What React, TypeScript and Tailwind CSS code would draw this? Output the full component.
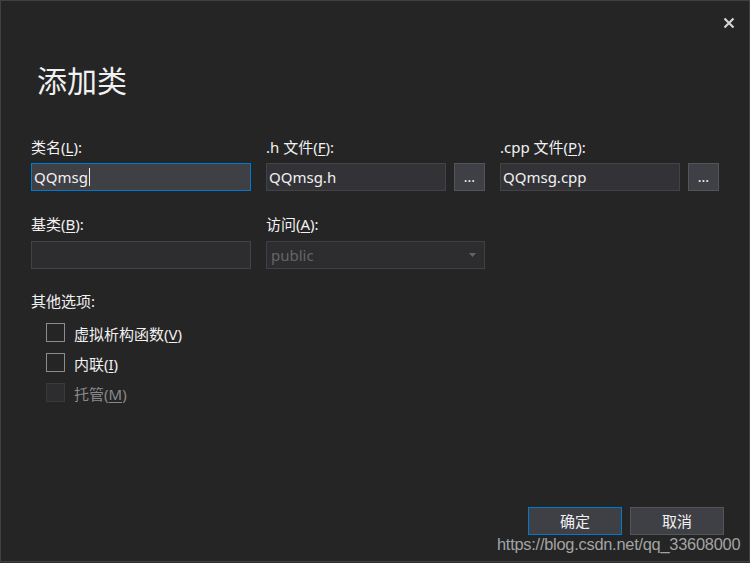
import React from "react";

const font = { fontFamily: '"Noto Sans", "Noto Sans CJK SC", sans-serif' };

function U({ c }: { c: string }) {
  return <span className="underline underline-offset-[2px] decoration-1">{c}</span>;
}

function Label({ children }: { children: React.ReactNode }) {
  return <div className="h-[20px] leading-[20px] text-[15px] text-[#f1f1f1]">{children}</div>;
}

function Input({ value, focused, className = "" }: { value?: string; focused?: boolean; className?: string }) {
  return (
    <div
      className={`h-[28px] border flex items-center pl-[2px] text-[15px] text-[#f1f1f1] ${
        focused ? "border-[#007acc] bg-[#3f3f46]" : "border-[#434346] bg-[#333337]"
      } ${className}`}
    >
      <span>{value}</span>
      {focused && <span className="inline-block w-px h-[18px] bg-[#f1f1f1] ml-px" />}
    </div>
  );
}

function Browse() {
  return (
    <div className="w-[31px] h-[28px] border border-[#555558] bg-[#3f3f46] flex items-center justify-center text-[14px] text-[#f1f1f1] pb-[2px]">
      ...
    </div>
  );
}

function Check({ label, disabled }: { label: React.ReactNode; disabled?: boolean }) {
  return (
    <div className="h-[30px] flex items-start">
      <div
        className={`w-[19px] h-[19px] border ${
          disabled ? "border-[#3a3a3d] bg-[#2d2d30]" : "border-[#8c8c8c] bg-[#252526]"
        }`}
      />
      <div
        className={`ml-[9px] h-[19px] leading-[23px] text-[15px] ${
          disabled ? "text-[#8a8a8a]" : "text-[#f1f1f1]"
        }`}
      >
        {label}
      </div>
    </div>
  );
}

export default function App() {
  return (
    <div className="w-[750px] h-[563px] bg-[#2d2d30] relative overflow-hidden" style={font}>
      <div className="w-[750px] h-[562px] border border-[#3f3f46] bg-[#252526] flex flex-col">
        <div className="h-[40px] flex justify-end pr-[14px] pt-[16px]">
          <svg width="12" height="12" viewBox="0 0 12 12">
            <path d="M1.5 1.5 L10.5 10.5 M10.5 1.5 L1.5 10.5" stroke="#d4d4d4" strokeWidth="2.2" />
          </svg>
        </div>
        <div className="pl-[36px] mt-[20px] h-[40px] leading-[40px] text-[30px] text-[#f1f1f1]">添加类</div>

        <div className="pl-[30px] mt-[36px] grid grid-cols-[220px_219px_219px] gap-x-[15px]">
          <div>
            <Label>
              类名(<U c="L" />):
            </Label>
            <Input value="QQmsg" focused className="mt-[6px]" />
          </div>
          <div>
            <Label>
              .h 文件(<U c="F" />):
            </Label>
            <div className="mt-[6px] flex gap-[8px]">
              <Input value="QQmsg.h" className="w-[180px]" />
              <Browse />
            </div>
          </div>
          <div>
            <Label>
              .cpp 文件(<U c="P" />):
            </Label>
            <div className="mt-[6px] flex gap-[8px]">
              <Input value="QQmsg.cpp" className="w-[180px]" />
              <Browse />
            </div>
          </div>

          <div className="mt-[23px]">
            <Label>
              基类(<U c="B" />):
            </Label>
            <div className="mt-[7px] h-[28px] border border-[#434346] bg-[#2d2d30]" />
          </div>
          <div className="mt-[23px]">
            <Label>
              访问(<U c="A" />):
            </Label>
            <div className="mt-[7px] h-[28px] border border-[#3f3f46] bg-[#2d2d30] flex items-center justify-between pl-[4px] pr-[8px] text-[15px] text-[#656565]">
              <span>public</span>
              <svg width="7" height="4" viewBox="0 0 7 4">
                <path d="M0 0 H7 L3.5 4 Z" fill="#656565" />
              </svg>
            </div>
          </div>
          <div />
        </div>

        <div className="pl-[30px] mt-[22px]">
          <Label>其他选项:</Label>
        </div>
        <div className="pl-[45px] mt-[12px] flex flex-col">
          <Check
            label={
              <>
                虚拟析构函数(<U c="V" />)
              </>
            }
          />
          <Check
            label={
              <>
                内联(<U c="I" />)
              </>
            }
          />
          <Check
            disabled
            label={
              <>
                托管(<U c="M" />)
              </>
            }
          />
        </div>

        <div className="flex-1" />
        <div className="flex justify-end gap-[8px] pr-[25px] mb-[26px]">
          <div className="w-[94px] h-[28px] border border-[#007acc] bg-[#3f3f46] flex items-center justify-center text-[15px] text-[#f1f1f1]">
            确定
          </div>
          <div className="w-[94px] h-[28px] border border-[#555558] bg-[#3f3f46] flex items-center justify-center text-[15px] text-[#f1f1f1]">
            取消
          </div>
        </div>
      </div>
      <div
        className="absolute left-[497px] top-[532px] text-[16.4px] leading-[24px] tracking-[-0.25px] text-[#a3a3a3]"
        style={{ fontFamily: '"Liberation Sans", Arial, sans-serif' }}
      >
        https://blog.csdn.net/qq_33608000
      </div>
    </div>
  );
}
